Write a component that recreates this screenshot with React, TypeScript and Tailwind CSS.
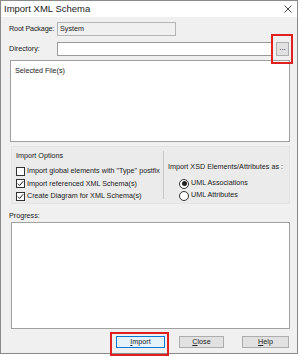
import React from "react";

const font = { fontFamily: '"Liberation Sans", Arial, sans-serif' };

function Check({ checked }: { checked?: boolean }) {
  return (
    <span className="flex h-[9px] w-[9px] shrink-0 items-center justify-center border border-[#333] bg-white">
      {checked && (
        <svg width="7" height="7" viewBox="0 0 7 7">
          <path d="M0.8 3.6 L2.7 5.5 L6.2 1.2" fill="none" stroke="#222" strokeWidth="1" />
        </svg>
      )}
    </span>
  );
}

function Radio({ on }: { on?: boolean }) {
  return (
    <span className="flex h-[10px] w-[10px] shrink-0 items-center justify-center rounded-full border border-[#333] bg-white">
      {on && <span className="h-[5px] w-[5px] rounded-full bg-[#222]" />}
    </span>
  );
}

function Btn({ children }: { children: React.ReactNode }) {
  return (
    <div className="flex h-[12px] items-center justify-center border border-[#adadad] bg-[#e1e1e1] text-[7.2px] text-[#222]">
      {children}
    </div>
  );
}

export default function App() {
  return (
    <div className="h-[357px] w-[300px] whitespace-nowrap bg-white text-[#1a1a1a]" style={font}>
      <div className="relative flex h-[354px] w-[298px] flex-col border border-[#8a8a8a] bg-[#f0f0f0]">
        {/* title bar */}
        <div className="flex h-[16px] items-center justify-between bg-white pl-[3px] pr-[5px]">
          <span className="text-[9.5px] text-[#222]">Import XML Schema</span>
          <svg width="8" height="8" viewBox="0 0 8 8">
            <path d="M0.5 0.5 L7.5 7.5 M7.5 0.5 L0.5 7.5" stroke="#333" strokeWidth="0.9" />
          </svg>
        </div>

        <div className="flex flex-col px-[8px] pt-[5px] text-[7.2px]">
          <div className="flex h-[14px] items-center">
            <span className="w-[48px] tracking-[-0.15px]">Root Package:</span>
            <div className="flex h-[14px] w-[119px] items-center border border-[#b5b5b5] bg-[#f0f0f0] pl-[2px]">
              System
            </div>
          </div>

          <div className="mt-[6px] flex h-[14px] items-center">
            <span className="w-[48px]">Directory:</span>
            <div className="h-[14px] w-[216px] border border-[#9a9a9a] bg-white" />
            <div className="ml-[3px] flex h-[14px] w-[13px] items-center justify-center border border-[#adadad] bg-[#e1e1e1] pb-[3px] text-[8px]">
              ...
            </div>
          </div>

          <div className="mt-[4px] ml-[1px] h-[82px] w-[280px] border border-[#a0a0a0] bg-white px-[4px] pt-[5px]">
            Selected File(s)
          </div>

          <div className="mt-[4px] ml-[2px] flex h-[58px] w-[279px] border border-[#e3e3e3] bg-[#ebebeb]">
            <div className="flex w-[151px] flex-col overflow-hidden pl-[4px] pt-[4px]">
              <span className="mb-[3px]">Import Options</span>
              <div className="flex h-[13px] items-center gap-[2px]">
                <Check />
                <span>Import global elements with "Type" postfix</span>
              </div>
              <div className="flex h-[13px] items-center gap-[2px]">
                <Check checked />
                <span>Import referenced XML Schema(s)</span>
              </div>
              <div className="flex h-[13px] items-center gap-[2px]">
                <Check checked />
                <span>Create Diagram for XML Schema(s)</span>
              </div>
            </div>
            <div className="my-[4px] w-px bg-[#c8c8c8]" />
            <div className="flex flex-col pl-[4px] pt-[15px]">
              <span className="mb-[5px]">Import XSD Elements/Attributes as :</span>
              <div className="flex h-[12px] items-center gap-[2px] pl-[11px]">
                <Radio on />
                <span>UML Associations</span>
              </div>
              <div className="flex h-[12px] items-center gap-[2px] pl-[11px]">
                <Radio />
                <span>UML Attributes</span>
              </div>
            </div>
          </div>

          <span className="mt-[7px] h-[11px]">Progress:</span>
          <div className="ml-[2px] h-[107px] w-[279px] border border-[#a0a0a0] bg-white" />

          <div className="mt-[7px] flex">
            <div className="ml-[107px] w-[49px] border border-[#0078d7] bg-[#e5f1fb]">
              <div className="flex h-[10px] items-center justify-center text-[7.2px]">
                <span className="underline">I</span>mport
              </div>
            </div>
            <div className="ml-[14px] w-[45px]">
              <Btn>
                <span className="underline">C</span>lose
              </Btn>
            </div>
            <div className="ml-[18px] w-[47px]">
              <Btn>
                <span className="underline">H</span>elp
              </Btn>
            </div>
          </div>
        </div>

        {/* annotation highlights */}
        <div className="absolute left-[270px] top-[33px] h-[30px] w-[22px] border-2 border-[#e0201e]" />
        <div className="absolute left-[109px] top-[331px] h-[24px] w-[59px] border-2 border-[#e0201e]" />
      </div>
    </div>
  );
}
